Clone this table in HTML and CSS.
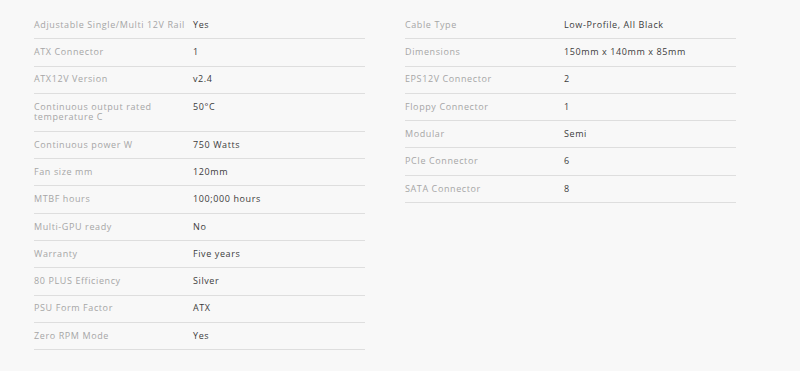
FILE: index.html
```html
<!DOCTYPE html>
<html lang="en">
<head>
    <meta charset="UTF-8">
    <meta name="viewport" content="width=device-width, initial-scale=1.0">
    <title>Specifications</title>
    <link rel="stylesheet" href="styles.css">
</head>
<body>
    <div class="specs">
        <dl class="spec-list">
            <div class="spec-row"><dt>Adjustable Single/Multi 12V Rail</dt><dd>Yes</dd></div>
            <div class="spec-row"><dt>ATX Connector</dt><dd>1</dd></div>
            <div class="spec-row"><dt>ATX12V Version</dt><dd>v2.4</dd></div>
            <div class="spec-row"><dt>Continuous output rated temperature C</dt><dd>50°C</dd></div>
            <div class="spec-row"><dt>Continuous power W</dt><dd>750 Watts</dd></div>
            <div class="spec-row"><dt>Fan size mm</dt><dd>120mm</dd></div>
            <div class="spec-row"><dt>MTBF hours</dt><dd>100;000 hours</dd></div>
            <div class="spec-row"><dt>Multi-GPU ready</dt><dd>No</dd></div>
            <div class="spec-row"><dt>Warranty</dt><dd>Five years</dd></div>
            <div class="spec-row"><dt>80 PLUS Efficiency</dt><dd>Silver</dd></div>
            <div class="spec-row"><dt>PSU Form Factor</dt><dd>ATX</dd></div>
            <div class="spec-row"><dt>Zero RPM Mode</dt><dd>Yes</dd></div>
        </dl>
        <dl class="spec-list">
            <div class="spec-row"><dt>Cable Type</dt><dd>Low-Profile, All Black</dd></div>
            <div class="spec-row"><dt>Dimensions</dt><dd>150mm x 140mm x 85mm</dd></div>
            <div class="spec-row"><dt>EPS12V Connector</dt><dd>2</dd></div>
            <div class="spec-row"><dt>Floppy Connector</dt><dd>1</dd></div>
            <div class="spec-row"><dt>Modular</dt><dd>Semi</dd></div>
            <div class="spec-row"><dt>PCIe Connector</dt><dd>6</dd></div>
            <div class="spec-row"><dt>SATA Connector</dt><dd>8</dd></div>
        </dl>
    </div>
</body>
</html>
```

FILE: styles.css
```css
body {
    margin: 0;
    background-color: #f8f8f8;
    font-family: "Open Sans", "Liberation Sans", sans-serif;
}
.specs {
    display: flex;
    gap: 40px;
    padding: 12px 0 0 34px;
}
.spec-list {
    width: 331px;
    margin: 0;
}
.spec-row {
    display: flex;
    padding: 7.8px 0;
    border-bottom: 1px solid #dedede;
    font-size: 9px;
    line-height: 10.7px;
    letter-spacing: 0.6px;
}
.spec-row dt {
    flex: 0 0 159px;
    color: #a6a6a6;
}
.spec-row dd {
    margin: 0;
    color: #3c3c3c;
}
```
